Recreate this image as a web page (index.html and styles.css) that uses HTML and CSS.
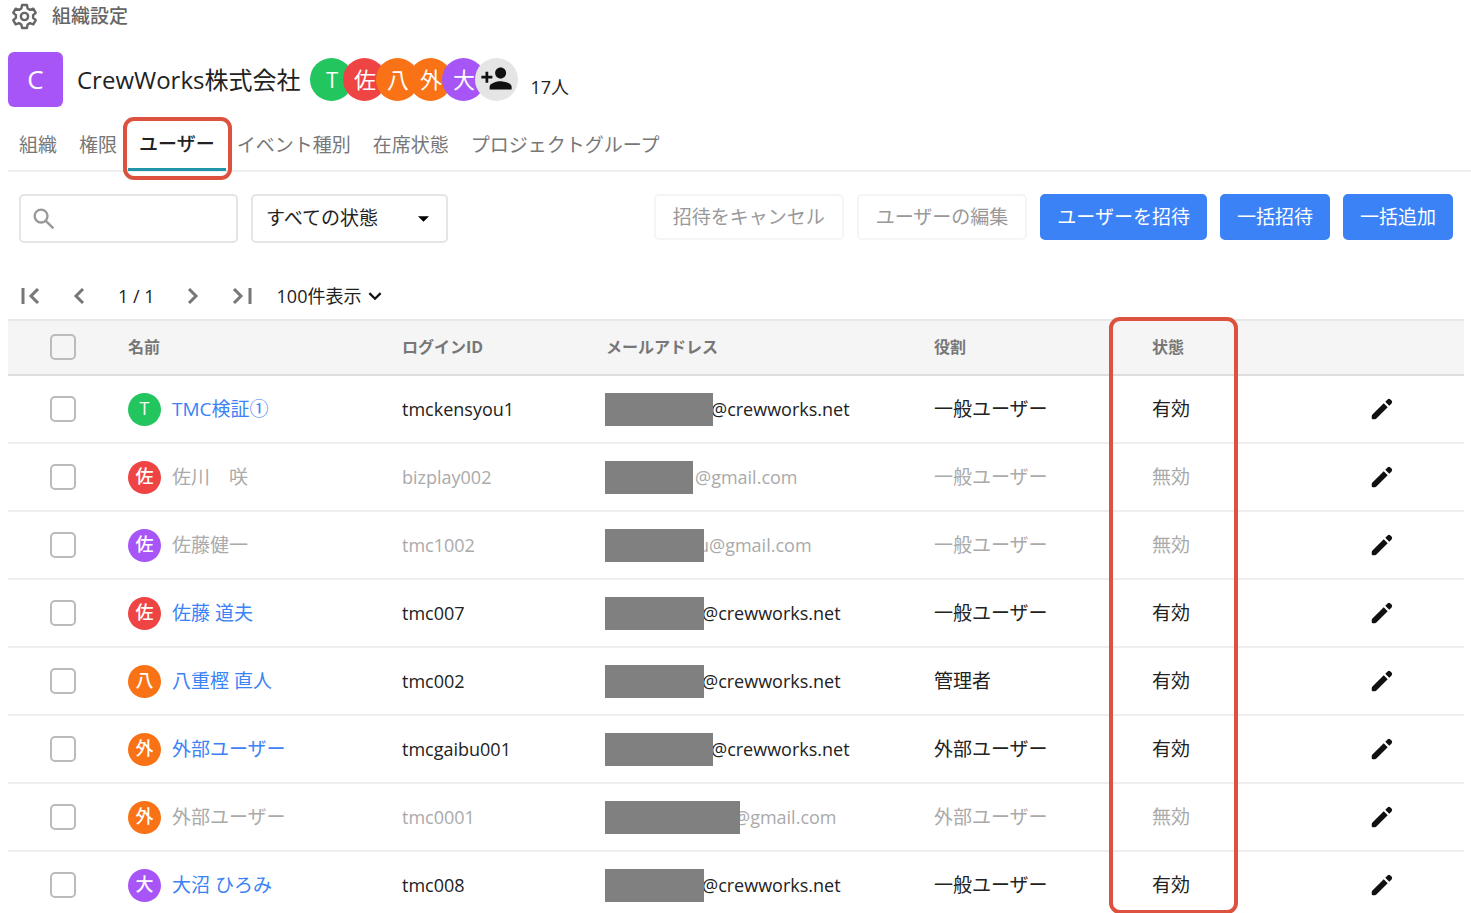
FILE: index.html
```html
<!DOCTYPE html>
<html lang="ja">
<head>
    <meta charset="UTF-8">
    <title>組織設定</title>
    <link rel="stylesheet" href="styles.css">
</head>
<body>
    <svg class="sprite" aria-hidden="true">
        <symbol id="pencil" viewBox="0 0 24 24">
            <path d="M3.8 16.8 13.5 7.1 16.9 10.5 7.2 20.2Q6.6 20.8 5.800 20.800H4.200Q3.200 20.800 3.200 19.800V18.200Q3.200 17.400 3.800 16.800ZM14.800 5.800 16.800 3.800Q18 2.700 19.200 3.800L20.200 4.800Q21.300 6 20.200 7.200L18.200 9.200Z"/>
        </symbol>
    </svg>

    <header class="page-title">
        <svg class="gear" viewBox="0 0 24 24">
            <path d="M10 2.5h4l.6 2.9 1.9 1.1 2.8-1 2 3.5-2.2 1.9v2.2l2.2 1.9-2 3.5-2.8-1-1.9 1.1-.6 2.9h-4l-.6-2.9-1.9-1.1-2.8 1-2-3.5 2.2-1.9v-2.2L2.7 9l2-3.5 2.8 1 1.9-1.1z"/>
            <circle cx="12" cy="12" r="3"/>
        </svg>
        <h1>組織設定</h1>
    </header>

    <section class="org">
        <div class="org-logo">C</div>
        <h2>CrewWorks株式会社</h2>
        <div class="members">
            <span class="avatar green">T</span>
            <span class="avatar red">佐</span>
            <span class="avatar orange">八</span>
            <span class="avatar orange">外</span>
            <span class="avatar purple">大</span>
            <button type="button" class="avatar add" aria-label="メンバーを追加">
                <svg viewBox="0 0 24 24"><path d="M15 12c2.21 0 4-1.79 4-4s-1.79-4-4-4-4 1.79-4 4 1.79 4 4 4zm-9-2V7H4v3H1v2h3v3h2v-3h3v-2H6zm9 4c-2.67 0-8 1.34-8 4v2h16v-2c0-2.66-5.33-4-8-4z"/></svg>
            </button>
        </div>
        <span class="count">17人</span>
    </section>

    <nav class="tabs">
        <a href="#">組織</a>
        <a href="#">権限</a>
        <a href="#" class="active">ユーザー<span class="callout"></span></a>
        <a href="#">イベント種別</a>
        <a href="#">在席状態</a>
        <a href="#">プロジェクトグループ</a>
    </nav>

    <div class="toolbar">
        <label class="search">
            <svg viewBox="0 0 24 24"><circle cx="9.5" cy="9.5" r="5.5"/><path d="M13.8 13.8 20 20"/></svg>
            <input type="text" aria-label="検索">
        </label>
        <div class="state">
            <select aria-label="状態">
                <option>すべての状態</option>
            </select>
            <svg viewBox="0 0 10 5"><path d="M0 0h10L5 5z"/></svg>
        </div>
        <div class="actions">
            <button type="button" disabled>招待をキャンセル</button>
            <button type="button" disabled>ユーザーの編集</button>
            <button type="button" class="primary">ユーザーを招待</button>
            <button type="button" class="primary">一括招待</button>
            <button type="button" class="primary">一括追加</button>
        </div>
    </div>

    <div class="pager">
        <button type="button" aria-label="最初"><svg viewBox="0 0 20 16"><path d="M2 0v16M17 1 10 8l7 7"/></svg></button>
        <button type="button" aria-label="前へ"><svg viewBox="0 0 20 16"><path d="M12 1 5 8l7 7"/></svg></button>
        <span class="page">1 / 1</span>
        <button type="button" aria-label="次へ"><svg viewBox="0 0 20 16"><path d="M7 1l7 7-7 7"/></svg></button>
        <button type="button" aria-label="最後"><svg viewBox="0 0 20 16"><path d="M2 1l7 7-7 7M18 0v16"/></svg></button>
        <div class="per-page">
            <select aria-label="表示件数">
                <option>100件表示</option>
            </select>
            <svg viewBox="0 0 12 8"><path d="M1 1l5 5 5-5"/></svg>
        </div>
    </div>

    <div class="list">
        <table>
            <colgroup>
                <col class="col-check"><col class="col-name"><col class="col-login"><col class="col-mail">
                <col class="col-role"><col class="col-state"><col class="col-edit">
            </colgroup>
            <thead>
                <tr>
                    <th class="check"><input type="checkbox" aria-label="すべて選択"></th>
                    <th>名前</th>
                    <th>ログインID</th>
                    <th>メールアドレス</th>
                    <th>役割</th>
                    <th class="status">状態<span class="callout"></span></th>
                    <th></th>
                </tr>
            </thead>
            <tbody>
                <tr>
                    <td class="check"><input type="checkbox" aria-label="選択"></td>
                    <td><div class="user"><span class="avatar green">T</span><a href="#">TMC検証①</a></div></td>
                    <td class="latin">tmckensyou1</td>
                    <td class="latin"><div class="mail"><span class="mask mask-l"></span>@crewworks.net</div></td>
                    <td>一般ユーザー</td>
                    <td class="status">有効</td>
                    <td class="edit"><button type="button" aria-label="編集"><svg><use href="#pencil"/></svg></button></td>
                </tr>
                <tr class="off">
                    <td class="check"><input type="checkbox" aria-label="選択"></td>
                    <td><div class="user"><span class="avatar red">佐</span><a href="#">佐川　咲</a></div></td>
                    <td class="latin">bizplay002</td>
                    <td class="latin"><div class="mail"><span class="mask mask-s"></span>@gmail.com</div></td>
                    <td>一般ユーザー</td>
                    <td class="status">無効</td>
                    <td class="edit"><button type="button" aria-label="編集"><svg><use href="#pencil"/></svg></button></td>
                </tr>
                <tr class="off">
                    <td class="check"><input type="checkbox" aria-label="選択"></td>
                    <td><div class="user"><span class="avatar purple">佐</span><a href="#">佐藤健一</a></div></td>
                    <td class="latin">tmc1002</td>
                    <td class="latin"><div class="mail"><span class="mask mask-m over"></span>u@gmail.com</div></td>
                    <td>一般ユーザー</td>
                    <td class="status">無効</td>
                    <td class="edit"><button type="button" aria-label="編集"><svg><use href="#pencil"/></svg></button></td>
                </tr>
                <tr>
                    <td class="check"><input type="checkbox" aria-label="選択"></td>
                    <td><div class="user"><span class="avatar red">佐</span><a href="#">佐藤 道夫</a></div></td>
                    <td class="latin">tmc007</td>
                    <td class="latin"><div class="mail"><span class="mask mask-m"></span>@crewworks.net</div></td>
                    <td>一般ユーザー</td>
                    <td class="status">有効</td>
                    <td class="edit"><button type="button" aria-label="編集"><svg><use href="#pencil"/></svg></button></td>
                </tr>
                <tr>
                    <td class="check"><input type="checkbox" aria-label="選択"></td>
                    <td><div class="user"><span class="avatar orange">八</span><a href="#">八重樫 直人</a></div></td>
                    <td class="latin">tmc002</td>
                    <td class="latin"><div class="mail"><span class="mask mask-m"></span>@crewworks.net</div></td>
                    <td>管理者</td>
                    <td class="status">有効</td>
                    <td class="edit"><button type="button" aria-label="編集"><svg><use href="#pencil"/></svg></button></td>
                </tr>
                <tr>
                    <td class="check"><input type="checkbox" aria-label="選択"></td>
                    <td><div class="user"><span class="avatar orange">外</span><a href="#">外部ユーザー</a></div></td>
                    <td class="latin">tmcgaibu001</td>
                    <td class="latin"><div class="mail"><span class="mask mask-l"></span>@crewworks.net</div></td>
                    <td>外部ユーザー</td>
                    <td class="status">有効</td>
                    <td class="edit"><button type="button" aria-label="編集"><svg><use href="#pencil"/></svg></button></td>
                </tr>
                <tr class="off">
                    <td class="check"><input type="checkbox" aria-label="選択"></td>
                    <td><div class="user"><span class="avatar orange">外</span><a href="#">外部ユーザー</a></div></td>
                    <td class="latin">tmc0001</td>
                    <td class="latin"><div class="mail"><span class="mask mask-xl over"></span>@gmail.com</div></td>
                    <td>外部ユーザー</td>
                    <td class="status">無効</td>
                    <td class="edit"><button type="button" aria-label="編集"><svg><use href="#pencil"/></svg></button></td>
                </tr>
                <tr>
                    <td class="check"><input type="checkbox" aria-label="選択"></td>
                    <td><div class="user"><span class="avatar purple">大</span><a href="#">大沼 ひろみ</a></div></td>
                    <td class="latin">tmc008</td>
                    <td class="latin"><div class="mail"><span class="mask mask-m"></span>@crewworks.net</div></td>
                    <td>一般ユーザー</td>
                    <td class="status">有効</td>
                    <td class="edit"><button type="button" aria-label="編集"><svg><use href="#pencil"/></svg></button></td>
                </tr>
            </tbody>
        </table>
    </div>
</body>
</html>
```
FILE: styles.css
```css
* {
    box-sizing: border-box;
}
body {
    margin: 0;
    background: #fff;
    color: #222;
    font-family: "Open Sans", "Noto Sans CJK JP", sans-serif;
    font-size: 19px;
    line-height: 28px;
}
button, input, select {
    font: inherit;
    color: inherit;
}
button {
    cursor: pointer;
}
a {
    text-decoration: none;
}
h1, h2 {
    margin: 0;
}
.sprite {
    display: none;
}

/* title */
.page-title {
    display: flex;
    align-items: center;
    gap: 13px;
    height: 32px;
    padding-left: 10px;
}
.page-title h1 {
    font-size: 19px;
    font-weight: 500;
    color: #666;
}
.gear {
    width: 29px;
    height: 29px;
    fill: none;
    stroke: #666;
    stroke-width: 2;
    stroke-linejoin: round;
}

/* organization */
.org {
    display: flex;
    align-items: center;
    padding: 20px 8px 0;
}
.org-logo {
    width: 55px;
    height: 55px;
    margin-right: 14px;
    border-radius: 6px;
    background: #a855f7;
    color: #fff;
    font-size: 26px;
    line-height: 55px;
    text-align: center;
}
.org h2 {
    font-size: 24px;
    font-weight: 400;
}
.members {
    display: flex;
    margin: 0 12px 0 10px;
}
.avatar {
    display: flex;
    flex: none;
    align-items: center;
    justify-content: center;
    width: 33px;
    height: 33px;
    padding: 0 0 2px;
    border-radius: 50%;
    color: #fff;
    font-size: 18px;
    font-weight: 500;
}
.members .avatar {
    width: 43px;
    height: 43px;
    font-size: 22px;
    font-weight: 400;
}
.members .avatar + .avatar {
    margin-left: -10px;
}
.green { background: #22c55e; }
.red { background: #ef4444; }
.orange { background: #f97316; }
.purple { background: #a855f7; }
.add {
    border: 0;
    background: #e5e5e5;
}
.add svg {
    width: 33px;
    height: 33px;
    fill: #111;
}
.count {
    padding-top: 15px;
    font-size: 18px;
}

/* tabs */
.tabs {
    display: flex;
    height: 54px;
    margin: 11px 0 0 8px;
    border-bottom: 2px solid #eee;
}
.tabs a {
    position: relative;
    padding: 0 11px;
    line-height: 54px;
    color: #777;
}
.tabs .active {
    height: 53px;
    border-bottom: 3px solid #2196a8;
    color: #222;
    font-weight: 500;
    line-height: 52px;
}
.callout {
    position: absolute;
    z-index: 2;
    border: 4px solid #dc523e;
    border-radius: 11px;
    pointer-events: none;
}
.tabs .callout {
    top: -1px;
    right: -6px;
    bottom: -12px;
    left: -5px;
}

/* toolbar */
.toolbar {
    display: flex;
    align-items: flex-start;
    gap: 13px;
    padding: 22px 18px 0 19px;
}
.search, .state {
    display: flex;
    align-items: center;
    height: 49px;
    border: 2px solid #e5e5e5;
    border-radius: 5px;
}
.search {
    width: 219px;
    padding-left: 9px;
}
.search svg {
    flex: none;
    width: 28px;
    height: 28px;
    fill: none;
    stroke: #999;
    stroke-width: 2;
}
.search input {
    width: 100%;
    min-width: 0;
    border: 0;
    outline: 0;
    background: none;
}
select {
    border: 0;
    outline: 0;
    background: none;
    appearance: none;
}
.state {
    position: relative;
    width: 197px;
}
.state select {
    width: 100%;
    padding: 0 13px 2px;
}
.state svg {
    position: absolute;
    right: 17px;
    width: 11px;
    height: 6px;
    pointer-events: none;
}
.actions {
    display: flex;
    gap: 13px;
    margin-left: auto;
}
.actions button {
    height: 46px;
    padding: 0 17px;
    border: 2px solid #f5f5f5;
    border-radius: 5px;
    background: #fff;
    color: #999;
    line-height: 28px;
}
.actions .primary {
    padding: 0 15px;
    border-color: #3b82f6;
    background: #3b82f6;
    color: #fff;
}

/* pager */
.pager {
    display: flex;
    align-items: center;
    height: 46px;
    margin-top: 30px;
    padding-left: 20px;
    font-size: 18px;
}
.pager button {
    display: flex;
    padding: 0;
    border: 0;
    background: none;
}
.pager button + button {
    margin-left: 28px;
}
.pager button svg {
    width: 22px;
    height: 16px;
    fill: none;
    stroke: #777;
    stroke-width: 3;
}
.page {
    margin: 0 26px;
}
.per-page {
    display: flex;
    align-items: center;
    gap: 6px;
    margin-left: 24px;
}
.per-page select {
    padding: 0;
}
.per-page svg {
    width: 14px;
    height: 9px;
    fill: none;
    stroke: #111;
    stroke-width: 2;
}

/* user list */
.list {
    padding: 0 7px 0 8px;
}
table {
    width: 100%;
    table-layout: fixed;
    border-collapse: separate;
    border-spacing: 0;
}
.col-check { width: 120px; }
.col-name { width: 274px; }
.col-login { width: 204px; }
.col-mail { width: 328px; }
.col-role { width: 175px; }
.col-state { width: 129px; }
.col-edit { width: 226px; }
th, td {
    padding: 0;
    text-align: left;
    white-space: nowrap;
}
th {
    height: 57px;
    padding-bottom: 2px;
    border-top: 2px solid #e8e8e8;
    border-bottom: 2px solid #ddd;
    background: #f5f5f5;
    color: #777;
    font-size: 16px;
    font-weight: 700;
}
td {
    height: 68px;
    border-bottom: 2px solid #eee;
}
.latin {
    font-size: 18px;
}
.check {
    padding-left: 42px;
}
.check input {
    display: block;
    width: 26px;
    height: 26px;
    margin: 0;
    border: 2px solid #bbb;
    border-radius: 5px;
    background: #fff;
    appearance: none;
}
th.check input {
    background: none;
}
.user {
    display: flex;
    align-items: center;
    gap: 11px;
}
.user a {
    color: #3b82f6;
}
.off td, .off .user a {
    color: #aaa;
}
.mail {
    display: flex;
    align-items: center;
    margin-left: -1px;
}
.mask {
    position: relative;
    height: 33px;
    margin-right: -2px;
    background: #808080;
}
.mask-s { width: 88px; margin-right: 2px; }
.mask-m { width: 99px; }
.mask-l { width: 108px; }
.mask-xl { width: 135px; }
.mask.over { margin-right: -6px; }
.status {
    position: relative;
    padding-left: 43px;
}
.status .callout {
    top: -4px;
    left: 0;
    width: 129px;
    height: 597px;
}
.edit {
    padding-left: 130px;
}
.edit button {
    display: flex;
    padding: 0;
    border: 0;
    background: none;
}
.edit svg {
    width: 28px;
    height: 28px;
    fill: #111;
}
```
